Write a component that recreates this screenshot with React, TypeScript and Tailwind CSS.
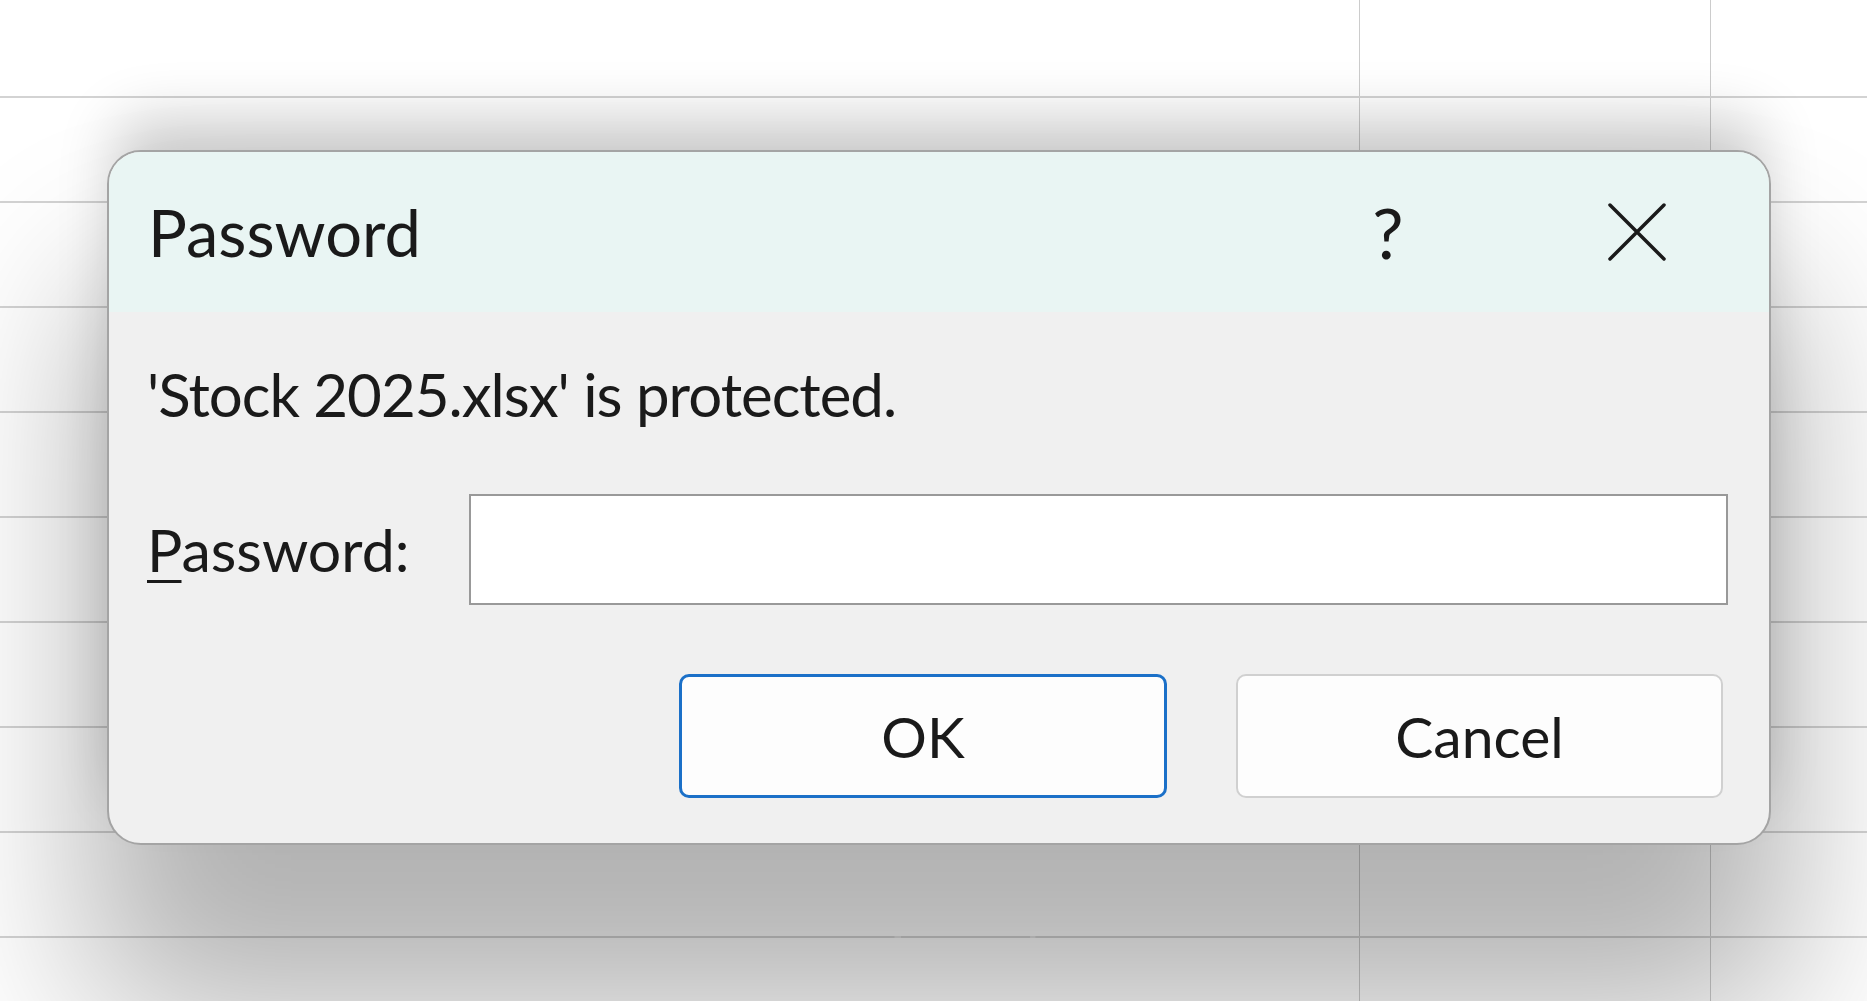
// Excel "Password" prompt over a blank worksheet
const rows = [
  'h-[98px]',
  'h-[105px]',
  'h-[105px]',
  'h-[105px]',
  'h-[105px]',
  'h-[105px]',
  'h-[105px]',
  'h-[105px]',
  'h-[105px]',
  'h-[105px]',
];

function CloseIcon() {
  return (
    <svg width="58" height="58" viewBox="0 0 58 58" fill="none">
      <path d="M2 2L56 56M56 2L2 56" stroke="#1a1a1a" strokeWidth="3.5" strokeLinecap="round" />
    </svg>
  );
}

export default function App() {
  return (
    <div className="relative h-[1001px] w-full overflow-hidden bg-white font-[Lato,sans-serif] text-[#1a1a1a]">
      {/* worksheet grid */}
      <div className="flex flex-col">
        {rows.map((h, i) => (
          <div key={i} className={`flex shrink-0 border-b-2 border-[#d3d3d3] ${h}`}>
            <div className="w-[1360px] shrink-0 border-r border-[#cccccc]" />
            <div className="w-[351px] shrink-0 border-r border-[#cccccc]" />
            <div className="flex-1" />
          </div>
        ))}
      </div>

      {/* watermark */}
      <div className="absolute left-[822px] top-[912px] font-['DejaVu_Sans',sans-serif] text-[70px] leading-none text-white/40">
        خمسات
      </div>

      {/* dialog */}
      <div className="absolute left-[107px] top-[150px] flex h-[695px] w-[1664px] flex-col overflow-hidden rounded-[34px] border-2 border-[#a4a4a4] bg-[#f0f0f0] shadow-[0_-40px_60px_-10px_rgba(0,0,0,0.2),0_150px_170px_20px_rgba(0,0,0,0.3)]">
        {/* title bar */}
        <div className="flex h-[160px] shrink-0 items-center bg-[#e9f5f3] pl-[39px] pr-[82px]">
          <div className="flex-1 text-[65px] leading-none">Password</div>
          <div className="w-[100px] text-center text-[70px] leading-none">?</div>
          <div className="ml-[149px] flex w-[100px] justify-center">
            <CloseIcon />
          </div>
        </div>

        {/* body */}
        <div className="flex flex-col pl-[38px] pr-[41px] pt-[46px]">
          <p className="text-[60px] leading-[72px] tracking-[-1px]">'Stock 2025.xlsx' is protected.</p>

          <div className="mt-[64px] flex items-center">
            <label className="w-[322px] shrink-0 text-[59px] leading-none">
              <span className="underline decoration-[3px] underline-offset-[8px]">P</span>assword:
            </label>
            <div className="h-[111px] flex-1 border-2 border-[#999999] bg-white" />
          </div>

          <div className="mt-[69px] flex justify-end gap-[69px] pr-[5px]">
            <button className="flex h-[124px] w-[488px] items-center justify-center rounded-[10px] border-[3px] border-[#1b70c8] bg-[#fdfdfd] text-[57px] leading-none">
              OK
            </button>
            <button className="flex h-[124px] w-[487px] items-center justify-center rounded-[10px] border-2 border-[#d0d0d0] bg-[#fdfdfd] text-[57px] leading-none">
              Cancel
            </button>
          </div>
        </div>
      </div>
    </div>
  );
}
